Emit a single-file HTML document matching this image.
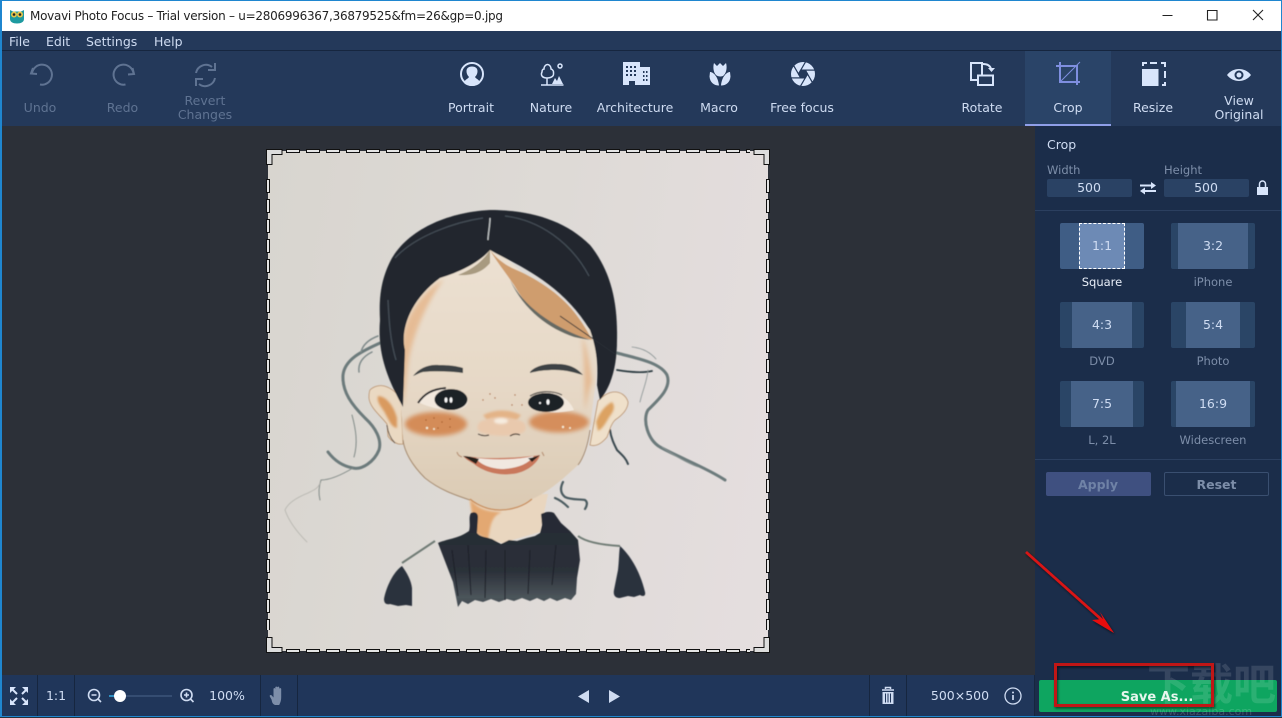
<!DOCTYPE html>
<html><head><meta charset="utf-8"><style>
html,body{margin:0;padding:0;width:1282px;height:717px;overflow:hidden;background:#2c3038;font-family:"DejaVu Sans","Liberation Sans",sans-serif}
.r{position:absolute}
.t{position:absolute;white-space:nowrap;font-size:12.5px;line-height:14px}
.c{transform:translateX(-50%);text-align:center}
.l{color:#cfdcf2}.d{color:#5f7392}.m{color:#7d8ea9}
.tile{position:absolute;width:84px;height:46px;background:#2a4566;border-radius:2px}
.tile i{position:absolute;top:0;bottom:0;background:#466288;display:block}
.tile b{position:absolute;left:0;right:0;top:16px;text-align:center;font-weight:normal;font-size:12.5px;line-height:14px;color:#cfdcf2}
svg{position:absolute;left:0;top:0}
</style></head><body>
<div class="r" style="left:0;top:0;width:1282px;height:31px;background:#fff"></div>
<div class="r" style="left:0;top:31px;width:1282px;height:95px;background:#24395a"></div>
<div class="r" style="left:0;top:50px;width:1282px;height:1px;background:#16263f"></div>
<div class="r" style="left:1025px;top:51px;width:86px;height:75px;background:#2a4468"></div>
<div class="r" style="left:1025px;top:123.5px;width:86px;height:2.5px;background:#8f9fe8"></div>
<div class="r" style="left:1035px;top:126px;width:247px;height:590px;background:#1b2d4a"></div>
<div class="r" style="left:0;top:675px;width:1035px;height:41px;background:#20365a"></div>
<div class="r" style="left:1035px;top:210px;width:247px;height:1px;background:#2b3f5f"></div>
<div class="r" style="left:1035px;top:459px;width:247px;height:1px;background:#2b3f5f"></div>
<div class="r" style="left:1047px;top:179px;width:85px;height:18px;background:#2a4264;border-radius:2px"></div>
<div class="r" style="left:1164px;top:179px;width:85px;height:18px;background:#2a4264;border-radius:2px"></div>
<div class="r" style="left:37px;top:675px;width:1px;height:41px;background:#16263f"></div>
<div class="r" style="left:74px;top:675px;width:1px;height:41px;background:#16263f"></div>
<div class="r" style="left:260px;top:675px;width:1px;height:41px;background:#16263f"></div>
<div class="r" style="left:297px;top:675px;width:1px;height:41px;background:#16263f"></div>
<div class="r" style="left:869px;top:675px;width:1px;height:41px;background:#16263f"></div>
<div class="r" style="left:906px;top:675px;width:1px;height:41px;background:#16263f"></div>
<div class="r" style="left:1034px;top:675px;width:1px;height:41px;background:#16263f"></div>

<div class="r" style="left:268px;top:151px;width:500px;height:500px;background:linear-gradient(100deg,#d8d5cf 0%,#dedad6 50%,#e5dedf 100%)"></div>

<svg width="1282" height="717" viewBox="0 0 1282 717" fill="none">
<defs>
<filter id="b3" x="-30%" y="-50%" width="160%" height="200%"><feGaussianBlur stdDeviation="3"/></filter>
<filter id="b1" x="-30%" y="-30%" width="160%" height="160%"><feGaussianBlur stdDeviation="1"/></filter>
<filter id="b2" x="-30%" y="-30%" width="160%" height="160%"><feGaussianBlur stdDeviation="2"/></filter>
<filter id="b05" x="-10%" y="-10%" width="120%" height="120%"><feGaussianBlur stdDeviation=".5"/></filter>
<filter id="sh" x="-10%" y="-10%" width="120%" height="120%"><feDropShadow dx="1" dy="1.500" stdDeviation="1.200" flood-color="#000" flood-opacity=".6"/></filter>
<linearGradient id="fc" x1="0" y1="0" x2="0" y2="1"><stop offset="0" stop-color="#ece1d2"/><stop offset=".55" stop-color="#e6d8c6"/><stop offset="1" stop-color="#dbcab3"/></linearGradient>
<linearGradient id="sw" x1="0" y1="0" x2="0" y2="1"><stop offset="0" stop-color="#262b34"/><stop offset=".62" stop-color="#2b3039"/><stop offset=".9" stop-color="#4c555b"/><stop offset="1" stop-color="#3c444b"/></linearGradient>
</defs>
<!-- owl -->
<path d="M10 10l3 1.500h8l3-1.500v9c0 3-3 4.500-7 4.500s-7-1.500-7-4.500z" fill="#1e9aa0"/>
<circle cx="14" cy="14.500" r="3" fill="#e3c44a"/><circle cx="20" cy="14.500" r="3" fill="#e3c44a"/>
<circle cx="14" cy="14.500" r="1.300" fill="#222"/><circle cx="20" cy="14.500" r="1.300" fill="#222"/>
<!-- window buttons -->
<path d="M1162.500 15.500h10M1207.500 10.500h9.500v9.500h-9.500zM1253 10l10 10M1263 10l-10 10" stroke="#222" stroke-width="1.100"/>
<!-- undo / redo / revert -->
<g stroke="#5f7392" stroke-width="2">
<path d="M33 68l-2 5.500 6 .5M32 73.500a10 10 0 1 1 8 11"/>
<path d="M132.500 68l1.500 6-6 .5M133.500 73.500a10 10 0 1 0-8 11"/>
<path d="M196 73a10 10 0 0 1 16-6M215 63v7h-7M215 78a10 10 0 0 1-16 6M196 86v-7h7"/>
</g>
<!-- portrait -->
<circle cx="472" cy="74" r="11" stroke="#d8e5fb" stroke-width="2"/>
<path d="M464 83c1-4 4-4 5-6-2-2-2.500-4-2.500-6 0-3 2.500-4.500 5.500-4.500s5.500 1.500 5.500 4.500c0 2-.5 4-2.500 6 1 2 4 2 5 6-2 2-5 3-8 3s-6-1-8-3z" fill="#d8e5fb"/>
<!-- nature -->
<g stroke="#d8e5fb" stroke-width="1.500"><path d="M541 85h22.500"/><path d="M547 85V78M547 78c-5 0-6.500-3-5-6 0-3 2-3 2-3 0-3 2-4.500 3.500-4.500s3.500 1.500 3.500 4.500c0 0 3 1 2.500 4 .5 3-2 5-6.500 5z"/><circle cx="560" cy="66" r="2"/></g>
<path d="M552 84l3-6 2 3 2-5 4 8z" fill="#d8e5fb"/>
<!-- architecture -->
<path d="M623 85V62h17v5h10v18z" fill="#d8e5fb"/>
<path d="M626 66h2v2h-2zM630 66h2v2h-2zM634 66h2v2h-2zM626 70h2v2h-2zM630 70h2v2h-2zM634 70h2v2h-2zM626 74h2v2h-2zM630 74h2v2h-2zM634 74h2v2h-2zM643 71h1.500v2H643zM646 71h1.500v2H646zM643 75h1.500v2H643zM646 75h1.500v2H646zM643 79h1.500v2H643zM646 79h1.500v2H646z" fill="#24395a"/>
<path d="M629 85v-4h6v4z" fill="#24395a"/>
<!-- macro -->
<path d="M714 63l3 3 3-3 3 3 3-3c1 3 1 9-2 12-1 2-6 2-8 0-3-3-3-9-2-12zM710 72c3 0 8 4 9 13.500-5 0-9-3-9.500-9zM730 72c-3 0-8 4-9 13.500 5 0 9-3 9.500-9z" fill="#d8e5fb"/>
<!-- free focus -->
<circle cx="803" cy="74" r="12" fill="#d8e5fb"/>
<g transform="translate(803 74)" stroke="#24395a" stroke-width="1.200">
<path d="M-2.250 -3.900H12"/><path transform="rotate(60)" d="M-2.250 -3.900H12"/><path transform="rotate(120)" d="M-2.250 -3.900H12"/><path transform="rotate(180)" d="M-2.250 -3.900H12"/><path transform="rotate(240)" d="M-2.250 -3.900H12"/><path transform="rotate(300)" d="M-2.250 -3.900H12"/>
<path d="M-4.500 0l2.250-3.900h4.500l2.250 3.900-2.250 3.900h-4.500z" fill="#24395a"/>
</g>
<!-- rotate -->
<g stroke="#d8e5fb" stroke-width="2"><path d="M977 80h-6V63h11v12"/><rect x="978" y="75.500" width="15" height="9.500"/><path d="M983 64c4 0 7 1 8 5"/></g>
<path d="M988 68h7l-3.500 4z" fill="#d8e5fb"/>
<!-- crop -->
<g stroke="#7f8fe0" stroke-width="2"><path d="M1056 66h21v19M1060 62v20h20"/></g>
<path d="M1061 81l19-19" stroke="#7f8fe0" stroke-width="1"/>
<!-- resize -->
<path d="M1143 66V63H1147M1150 63H1157M1161 63H1165V67M1165 71V78M1165 82V85H1162" stroke="#d8e5fb" stroke-width="2"/>
<rect x="1142" y="69" width="16.500" height="17" fill="#d8e5fb"/>
<!-- eye -->
<path d="M1227 75c6-8 18-8 24 0-6 8-18 8-24 0z" fill="#d8e5fb"/>
<circle cx="1239" cy="75" r="4.500" fill="#24395a"/><circle cx="1239" cy="75" r="2.500" fill="#d8e5fb"/>
<!-- swap/lock -->
<path d="M1140 185.500h13M1156 191h-13" stroke="#d8e5fb" stroke-width="2"/><path d="M1151 182l5 3.500-5 3.500zM1145 187.500l-5 3.500 5 3.500z" fill="#d8e5fb"/>
<path d="M1259.500 187v-3a3 3 0 0 1 6 0v3" stroke="#d8e5fb" stroke-width="1.500"/><rect x="1257" y="187" width="11" height="8" fill="#d8e5fb"/>
<!-- bottom left -->
<g stroke="#d8e5fb" stroke-width="2"><path d="M12 689l5 5M27 689l-5 5M12 703l5-5M27 703l-5-5"/></g>
<path d="M10 687h6l-6 6zM28 687h-6l6 6zM10 705h6l-6-6zM28 705h-6l6-6z" fill="#d8e5fb"/>
<g stroke="#cfdcf2" stroke-width="1.600"><circle cx="94" cy="695" r="5.500"/><path d="M91.500 695h5M98 699l3 3"/><circle cx="186.500" cy="695" r="5.500"/><path d="M184 695h5M186.500 692.500v5M190.500 699l3 3"/></g>
<path d="M109 696h63" stroke="#3c557a" stroke-width="1.500"/><path d="M109 696h8" stroke="#2fa7dd" stroke-width="1.500"/>
<circle cx="120" cy="696" r="6" fill="#fff"/>
<path d="M275 705c-3-1-3-4-3.500-5.500l-1.700-3c-.5-1.500 1-2 2-1l1.700 2V689c0-1.200 1.700-1.200 1.800 0v-1.500c0-1.200 2-1.200 2 0v0c0-1.200 2-1.200 2 0v1.500c0-1.200 1.900-1.200 1.900 0v8c0 3-.5 5-2 8z" fill="#7d8ea9"/>
<!-- arrows -->
<path d="M589 690v13l-11-6.500zM609 690v13l11-6.500z" fill="#cfdcf2"/>
<!-- trash -->
<path d="M882 690h12M885.500 689v-1.500h5v1.500" stroke="#cfdcf2" stroke-width="1.500"/>
<path d="M882.500 692h11v12h-11z" fill="#cfdcf2"/><path d="M885.500 693.500v9M888 693.500v9M890.500 693.500v9" stroke="#20365a"/>
<!-- info -->
<circle cx="1013" cy="696" r="8" stroke="#cfdcf2" stroke-width="1.300"/><path d="M1013 695v5" stroke="#cfdcf2" stroke-width="1.700"/><circle cx="1013" cy="692.500" r="1" fill="#cfdcf2"/>

<!-- PICTURE -->
<g filter="url(#b05)">
<!-- loose hair -->
<g fill="none" stroke-linecap="round" stroke-linejoin="round">
<path d="M380 343C365 350 345 358 343 375C342 392 352 405 365 418C376 428 382 440 379 450C374 462 362 470 353 468C342 466 334 460 328 452" stroke="#6c7a7b" stroke-width="3"/>
<path d="M378 336c-8 3-15 8-17 16M372 352c-10 5-14 12-13 20" stroke="#7f8a8a" stroke-width="1.500"/>
<path d="M352 415c4 15 6 28 2 42M353 468c-10 6-22 12-32 12-2 6-3 12-1 20" stroke="#828b88" stroke-width="1"/>
<path d="M320 483c-2 6-8 8-12 10-10 4-20 10-23 17 4 12 14 24 22 32" stroke="#b4b3ad" stroke-width=".8"/>
<path d="M617 353C635 358 660 362 667 375C672 388 658 400 648 410C642 420 648 440 660 447C680 458 705 467 725 480" stroke="#6c7a7b" stroke-width="3"/>
<path d="M617 370c12 2 26 3 35 1" stroke="#2c3a40" stroke-width="1.700"/>
<path d="M632 347c10 1 18 5 24 12M648 370c-1 12-6 22-8 32M662 447c10 7 22 15 36 20" stroke="#8a9494" stroke-width=".8"/>
<path d="M610 430c1 8 4 14 7 20 4 4 9 8 11 14" stroke="#3a4a50" stroke-width="2"/>
<path d="M563 482c-3 6-3 11 2 15 6 3 14 2 20 3 3 2 2 6 0 9M555 498c5 2 9 5 13 9" stroke="#4c5c60" stroke-width="2.200"/>
</g>
<!-- neck -->
<path d="M468 495l8 40 26 8 38-11 8-38z" fill="#e9d6bf"/>
<path d="M470 498c6 10 16 14 32 14-12 4-12 18-14 28l-11-6c-3-10-6-24-7-36z" fill="#e3a872" filter="url(#b1)"/>
<!-- straps -->
<path d="M402 563l33-22M578 536c8 6 25 9 42 10" stroke="#6f7b75" stroke-width="2"/>
<!-- sweater -->
<path d="M438 543c8-4 20-4 31-12 2-6-1-14 2-18 4-2 7 0 7 4l-1 16c3 4 9 4 15 6l9 5 8-4 8 1 10-3 8-2 5-3 2-8-1-11c4-2 9-3 13-1l7 10 9 8 8 9 2 20-3 18-1 16-5 6-6-2-8 3-7-3-6 3-7-3-7 3-8-3-8 3-7-2-8 3-8-3-8 3-8-2-7 4-6-3-4 6-5-25z" fill="url(#sw)"/>
<path d="M452 550l6 46M468 545l3 50M486 550l-1 48M505 550l0 50M530 550l-2 44M556 545l-4 40" stroke="#1b1f26" stroke-width="1"/>
<path d="M402 566c-9 6-16 22-18 33 0 4 2 6 6 5l8 2 8-1 6 1 0-18c-1-8-5-15-10-22zM620 546c10 9 20 25 25 46 1 4-2 5-5 3l-6 2-6-1-8 2c-5 0-7-3-6-8l4-20c1-8 1-18 2-24z" fill="#2c333c"/>
<!-- ears -->
<path d="M370 390c4-4 10-5 14-4 8 2 14 8 17 14l2 44c-6 1-12-3-15-8l-1-12c-6-8-17-16-18-26 0-3 0-6 1-8z" fill="#ead9c2" stroke="#b88f68" stroke-width=".8"/>
<path d="M378 396c8 0 16 10 19 22v10c-6-1-8-8-11-13-3-7-10-12-8-19z" fill="#d99a5f" filter="url(#b1)"/>
<path d="M628 402c-2-7-8-10-13-10-7 0-12 4-17 9l-8 44c6 2 12-2 17-8 3-8 4-13 8-17 6-4 13-10 13-18z" fill="#efe0ca" stroke="#b88f68" stroke-width=".8"/>
<path d="M612 402c-6 3-12 9-16 20l2 9c6-3 9-11 12-15 3-4 6-9 2-14z" fill="#dca262" filter="url(#b1)"/>
<path d="M387 425c1 8 4 14 8 18" stroke="#5a5048" stroke-width="1"/>
<!-- face -->
<path d="M490 245C460 255 420 280 402 330C398 370 400 400 402 420C402 440 405 455 415 468C430 485 450 494 470 500C480 506 490 510 500 510C510 510 520 506 530 500C545 494 560 482 578 465C586 452 590 430 594 395C598 370 598 350 590 330Z" fill="url(#fc)"/>
<path d="M404 405C400 380 400 350 404 330C410 310 425 290 444 279C428 300 412 335 408 365C406 380 405 395 404 405ZM582 336c5 10 8 30 10 45-4 12-5 20-7 30-1-25 0-50-3-75z" fill="#e4b183" opacity=".75" filter="url(#b2)"/>
<path d="M403 440C405 455 415 468 425 478C440 490 455 495 470 500M578 465c6-8 10-22 12-35" stroke="#a58a6e" stroke-width="1"/>
<path d="M470 499c10 8 20 11 30 11 12 0 24-4 32-11" stroke="#c88d58" stroke-width="1.300"/>
<!-- fringe -->
<path d="M490 250c6 8 14 14 22 18 24 10 48 26 62 44 8 10 14 20 18 28l-20-5c-20-8-42-22-58-50-8-12-18-24-24-35z" fill="#cf9d6e"/>
<path d="M510 280c14 26 40 46 80 60-6-1-12-2-16-3-24-8-50-26-64-57z" fill="#666a63"/>
<path d="M490 250c-5 8-14 18-32 25 12 1 24-2 32-12z" fill="#a89a80"/>
<!-- hair -->
<path d="M490 210C450 212 410 228 392 258C380 280 379 300 380 320C378 345 382 370 403 407L405 350C400 330 410 300 440 278C460 272 480 262 490 250C510 262 560 280 590 330C597 350 598 365 597 385L600 400C612 385 617 365 617 340C618 300 610 270 590 245C565 220 530 210 490 210Z" fill="#23282f"/>
<path d="M395 258c20-22 60-36 88-40M505 216c34 4 66 26 84 60M388 300c1 20 2 40 8 60" stroke="#454e57" stroke-width="1.200"/>
<path d="M490 218c0 8-2 16-2 22" stroke="#c8ccce" stroke-width="1.200"/>
<path d="M560 316l55 38" stroke="#2a2f35" stroke-width="1"/>
<!-- cheeks -->
<ellipse cx="436" cy="424" rx="31" ry="12" fill="#d48c58" filter="url(#b2)"/>
<ellipse cx="559" cy="422" rx="30" ry="10.500" fill="#d58e5c" filter="url(#b2)"/>
<path d="M483 415q19-9 38 0l-4 5h-30z" fill="#e3b387" filter="url(#b1)"/>
<g fill="#a8612f"><circle cx="426" cy="420" r=".8"/><circle cx="434" cy="418" r=".8"/><circle cx="442" cy="422" r=".8"/><circle cx="450" cy="419" r=".8"/><circle cx="438" cy="428" r=".8"/><circle cx="450" cy="427" r=".8"/><circle cx="483" cy="400" r=".7"/><circle cx="490" cy="394" r=".7"/><circle cx="495" cy="398" r=".7"/><circle cx="515" cy="395" r=".7"/><circle cx="522" cy="405" r=".7"/><circle cx="512" cy="405" r=".7"/></g>
<g fill="#f4ead4"><circle cx="427" cy="428" r="1.200"/><circle cx="434" cy="429" r="1"/><circle cx="563" cy="427" r="1.200"/><circle cx="570" cy="428" r="1"/></g>
<!-- nose -->
<path d="M480 432c-5-4-2-12 6-12 6-4 22-4 30 0 10 0 12 8 8 12-8 5-34 5-44 0z" fill="#e9c9ad" filter="url(#b1)"/>
<ellipse cx="501" cy="421" rx="7" ry="3" fill="#f6ece0" filter="url(#b1)"/>
<path d="M478 434c4 2 8 2 11 1M510 436c3-2 6-3 10-1" stroke="#4a3c36" stroke-width="1.200"/>
<!-- brows -->
<path d="M413 376c6-8 16-12 26-11 10 0 18 1 24 3v5c-14-2-30-2-40-1-4 1-7 3-10 4z" fill="#3d4344"/>
<path d="M530 372c4-5 14-9 28-8 12 0 20 5 25 11-8-2-16-5-28-5-10 0-18 1-25 3z" fill="#3d4344"/>
<!-- eyes -->
<path d="M418 402c6-8 14-12 26-13 14 0 22 6 24 12 0 5-6 9-14 9-12 0-24-2-36-8z" fill="#f2e8dd"/>
<ellipse cx="451" cy="399.500" rx="16.500" ry="10.500" fill="#1e2026"/>
<path d="M418 403c6-9 14-14 28-15" stroke="#26262a" stroke-width="2"/>
<path d="M528 404c2-7 12-12 22-11 12 1 20 8 24 17-8 2-18 3-28 2-8 0-16-3-18-8z" fill="#f2e8dd"/>
<ellipse cx="546" cy="402.500" rx="18" ry="9.500" fill="#1e2026"/>
<path d="M530 396c8-5 22-6 32-1" stroke="#4c4846" stroke-width="1.200"/>
<g fill="#fff"><ellipse cx="446" cy="400" rx="1.400" ry="2.500"/><ellipse cx="451" cy="400" rx="1.400" ry="2.800"/><ellipse cx="548" cy="402" rx="1.500" ry="2.800"/><circle cx="540" cy="403" r="1"/></g>
<!-- mouth -->
<path d="M463 456c6 0 14 2 22 2 16 0 34 0 55-3-2 8-14 18-28 19-14 2-30-3-38-10-3-2-8-4-11-8z" fill="#c9785c"/>
<path d="M476 458c18 2 40 2 58-2-6 8-16 12-30 13-12 0-24-4-28-11z" fill="#f1e8e0"/>
<path d="M463 456c6 0 12 2 16 3l-3 5zM540 455c-6 2-8 3-12 3l4 4z" fill="#26201f"/>
<path d="M457 452c1 4 3 4 5 5M542 452l2 4" stroke="#b89275" stroke-width="1.200"/>
</g>

<!-- selection border -->
<g fill="none">
<line x1="286" y1="151" x2="750" y2="151" stroke="#111" stroke-width="4" stroke-dasharray="14 6"/>
<line x1="287" y1="151" x2="750" y2="151" stroke="#e4e4e4" stroke-width="2" stroke-dasharray="12 8"/>
<line x1="286" y1="651" x2="750" y2="651" stroke="#111" stroke-width="4" stroke-dasharray="14 6"/>
<line x1="287" y1="651" x2="750" y2="651" stroke="#e4e4e4" stroke-width="2" stroke-dasharray="12 8"/>
<line x1="268" y1="179" x2="268" y2="630" stroke="#111" stroke-width="4" stroke-dasharray="14 6"/>
<line x1="268" y1="180" x2="268" y2="630" stroke="#e4e4e4" stroke-width="2" stroke-dasharray="12 8"/>
<line x1="768" y1="179" x2="768" y2="630" stroke="#111" stroke-width="4" stroke-dasharray="14 6"/>
<line x1="768" y1="180" x2="768" y2="630" stroke="#e4e4e4" stroke-width="2" stroke-dasharray="12 8"/>
</g>
<path d="M266.500 149.500h15.500v5h-10v10h-5.500zM769.500 149.500h-15.500v5h10v10h5.500zM266.500 652.500h15.500v-5h-10v-10h-5.500zM769.500 652.500h-15.500v-5h10v-10h5.500z" fill="#dcdcdc" stroke="#111" stroke-width="1"/>
</svg>

<div class="r" style="left:0;top:0;width:1.500px;height:717px;background:#1f86cf"></div>
<div class="r" style="left:1281px;top:0;width:1px;height:717px;background:#1f86cf"></div>
<div class="r" style="left:0;top:0;width:1282px;height:1px;background:#1f86cf"></div>
<div class="r" style="left:0;top:716px;width:1282px;height:1px;background:#1f86cf"></div>

<div class="t" style="left:30px;top:9px;color:#222;font-size:12px;letter-spacing:-.27px">Movavi Photo Focus – Trial version – u=2806996367,36879525&amp;fm=26&amp;gp=0.jpg</div>
<div class="t l" style="left:9px;top:35px">File</div>
<div class="t l" style="left:46px;top:35px">Edit</div>
<div class="t l" style="left:86px;top:35px">Settings</div>
<div class="t l" style="left:154px;top:35px">Help</div>
<div class="t d c" style="left:40px;top:101px">Undo</div>
<div class="t d c" style="left:122.500px;top:101px">Redo</div>
<div class="t d c" style="left:205px;top:94px">Revert<br>Changes</div>
<div class="t l c" style="left:471px;top:101px">Portrait</div>
<div class="t l c" style="left:551px;top:101px">Nature</div>
<div class="t l c" style="left:635px;top:101px">Architecture</div>
<div class="t l c" style="left:719px;top:101px">Macro</div>
<div class="t l c" style="left:802px;top:101px">Free focus</div>
<div class="t l c" style="left:982px;top:101px">Rotate</div>
<div class="t l c" style="left:1068px;top:101px">Crop</div>
<div class="t l c" style="left:1153px;top:101px">Resize</div>
<div class="t l c" style="left:1239px;top:94px">View<br>Original</div>
<div class="t l" style="left:1047px;top:138px">Crop</div>
<div class="t m" style="left:1047px;top:163px;font-size:11.500px">Width</div>
<div class="t m" style="left:1164px;top:163px;font-size:11.500px">Height</div>
<div class="t l c" style="left:1089px;top:181px">500</div>
<div class="t l c" style="left:1206px;top:181px">500</div>

<div class="tile" style="left:1060px;top:223px;background:#3f5d85"><i style="left:19px;width:46px;background:#6d8ab5;outline:1px dashed #fff;outline-offset:-1px"></i><b>1:1</b></div>
<div class="tile" style="left:1171px;top:223px"><i style="left:7px;width:70px"></i><b>3:2</b></div>
<div class="tile" style="left:1060px;top:302px"><i style="left:12px;width:60px"></i><b>4:3</b></div>
<div class="tile" style="left:1171px;top:302px"><i style="left:15px;width:54px"></i><b>5:4</b></div>
<div class="tile" style="left:1060px;top:381px"><i style="left:11px;width:62px"></i><b>7:5</b></div>
<div class="tile" style="left:1171px;top:381px"><i style="left:5px;width:74px"></i><b>16:9</b></div>
<div class="t c" style="left:1102px;top:275px;color:#e8eef8;font-size:11.500px">Square</div>
<div class="t m c" style="left:1213px;top:275px;font-size:11.500px">iPhone</div>
<div class="t m c" style="left:1102px;top:354px;font-size:11.500px">DVD</div>
<div class="t m c" style="left:1213px;top:354px;font-size:11.500px">Photo</div>
<div class="t m c" style="left:1102px;top:433px;font-size:11.500px">L, 2L</div>
<div class="t m c" style="left:1213px;top:433px;font-size:11.500px">Widescreen</div>

<div class="r" style="left:1046px;top:472px;width:105px;height:24px;background:#3f5080;border-radius:2px"></div>
<div class="r" style="left:1164px;top:472px;width:103px;height:22px;border:1px solid #3a4f70;border-radius:2px"></div>
<div class="t c" style="left:1098px;top:478px;color:#6f82a6;font-weight:bold">Apply</div>
<div class="t m c" style="left:1216.500px;top:478px;font-weight:bold">Reset</div>

<div class="t l c" style="left:56px;top:689px">1:1</div>
<div class="t l c" style="left:227px;top:689px">100%</div>
<div class="t l c" style="left:960px;top:689px">500×500</div>

<div class="r" style="left:1039px;top:680px;width:238px;height:32px;background:#0ea560;border-radius:2px"></div>
<div class="t c" style="left:1157px;top:691px;color:#e6f6ee;font-weight:bold;font-size:13px">Save As...</div>

<div class="t" style="left:1147px;top:657px;font-size:43px;line-height:50px;color:rgba(255,255,255,.12);font-family:'Noto Sans CJK SC',sans-serif;font-weight:bold;letter-spacing:0">下载吧</div>
<div class="t" style="left:1150px;top:706px;font-size:11px;line-height:11px;color:rgba(255,255,255,.16)">www.xiazaiba.com</div>

<svg width="1282" height="717" viewBox="0 0 1282 717" fill="none">
<g filter="url(#sh)">
<path d="M1026 552l76 68" stroke="#d81212" stroke-width="2.800"/>
<path d="M1114 633l-22-13 11-1-3-7z" fill="#e81010"/>
<rect x="1055.500" y="664.500" width="157" height="41" stroke="#c01414" stroke-width="3"/>
</g>
</svg>
</body></html>
